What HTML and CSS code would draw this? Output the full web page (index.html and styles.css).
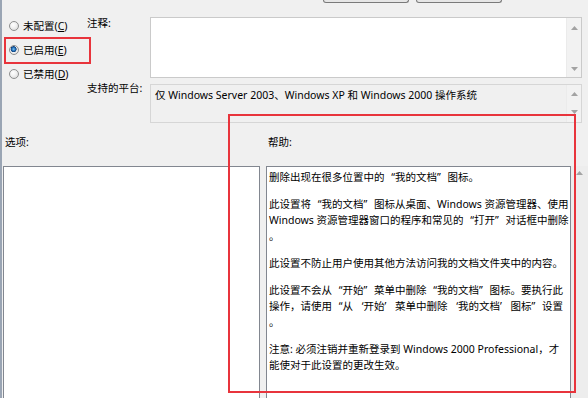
FILE: index.html
```html
<!doctype html>
<html lang="zh-CN">
<head>
	<meta charset="utf-8">
	<title>已启用 | 组策略设置</title>
	<link rel="stylesheet" href="styles.css">
</head>
<body>
	<div class="dialog">

		<div class="top-buttons">
			<span class="btn"></span>
			<span class="btn"></span>
		</div>

		<div class="settings">
			<div class="states">
				<label class="state"><input class="radio" type="radio" name="state"><span>未配置(<u>C</u>)</span></label>
				<label class="state"><input class="radio" type="radio" name="state" checked><span>已启用(<u>E</u>)</span></label>
				<label class="state"><input class="radio" type="radio" name="state"><span>已禁用(<u>D</u>)</span></label>
			</div>

			<div class="field-label">注释:</div>
			<div class="box memo">
				<div class="box-text"></div>
				<div class="scroll">
					<svg width="7" height="4" viewBox="0 0 7 4"><path d="M0 4L3.5 0L7 4Z" fill="#a3a3a3"/></svg>
					<svg width="7" height="4" viewBox="0 0 7 4"><path d="M0 0L3.5 4L7 0Z" fill="#a3a3a3"/></svg>
				</div>
			</div>

			<div class="field-label field-label--platform">支持的平台:</div>
			<div class="box platform">
				<div class="box-text">仅 Windows Server 2003、Windows XP 和 Windows 2000 操作系统</div>
				<div class="scroll">
					<svg width="7" height="4" viewBox="0 0 7 4"><path d="M0 4L3.5 0L7 4Z" fill="#a3a3a3"/></svg>
					<svg width="7" height="4" viewBox="0 0 7 4"><path d="M0 0L3.5 4L7 0Z" fill="#a3a3a3"/></svg>
				</div>
			</div>
		</div>

		<div class="panes">
			<div class="pane">
				<div class="pane-title">选项:</div>
				<div class="list"></div>
			</div>

			<div class="pane">
				<div class="pane-title">帮助:</div>
				<div class="help-wrap">
					<div class="help-text">
						<p>删除出现在很多位置中的<span class="ql">“</span>我的文档<span class="qr">”</span>图标。</p>
						<p>此设置将<span class="ql">“</span>我的文档<span class="qr">”</span>图标从桌面、Windows 资源管理器、使用<br>Windows 资源管理器窗口的程序和常见的<span class="ql">“</span>打开<span class="qr">”</span>对话框中删除<br>。</p>
						<p>此设置不防止用户使用其他方法访问我的文档文件夹中的内容。</p>
						<p>此设置不会从<span class="ql">“</span>开始<span class="qr">”</span>菜单中删除<span class="ql">“</span>我的文档<span class="qr">”</span>图标。要执行此<br>操作，请使用<span class="ql">“</span>从<span class="ql">‘</span>开始<span class="qr">’</span>菜单中删除<span class="ql">‘</span>我的文档<span class="qr">’</span>图标<span class="qr">”</span>设置<br>。</p>
						<p>注意: 必须注销并重新登录到 Windows 2000 Professional，才<br>能使对于此设置的更改生效。</p>
					</div>
					<div class="help-scroll">
						<svg width="7" height="4" viewBox="0 0 7 4"><path d="M0 4L3.5 0L7 4Z" fill="#a3a3a3"/></svg>
					</div>
				</div>
			</div>
		</div>

		<!-- красные рамки-пометки поверх скриншота -->
		<div class="mark mark-radio"></div>
		<div class="mark mark-help"></div>

	</div>
</body>
</html>
```

FILE: styles.css
```css
* {
	box-sizing: border-box;
	margin: 0;
	padding: 0;
}

body {
	width: 588px;
	height: 398px;
	overflow: hidden;
	color: #000;
	font: 400 10.5px/12px 'Noto Sans', 'Noto Sans CJK SC', sans-serif;
	background: #f0f0f0;
}

.dialog {
	position: relative;
	height: 398px;
	border-left: 2px solid #9aa5b4;
}

/* кнопки сверху, видны только нижние края */
.top-buttons {
	display: flex;
	gap: 7px;
	height: 17px;
	padding-left: 321px;
}

.btn {
	width: 86px;
	height: 3px;
	border: 1px solid #7a7a7a;
	border-top: 0;
	border-radius: 0 0 3px 3px;
	background: #e6e6e6;
}

.settings {
	display: grid;
	grid-template-columns: 85px 63px 432px;
	grid-template-rows: 61px 39px;
	row-gap: 6px;
}

.states {
	grid-row: 1 / 3;
	display: flex;
	flex-direction: column;
	gap: 12px;
	padding: 3px 0 0 7px;
}

.state {
	display: flex;
	align-items: center;
	gap: 4px;
	height: 12px;
	white-space: nowrap;
}

.state u {
	text-underline-offset: 1px;
}

.radio {
	width: 10px;
	height: 10px;
	border: 1px solid #8e8f8f;
	border-radius: 50%;
	background: radial-gradient(circle at 40% 35%, #fff 0, #f0f0f0 45%, #d4d4d4 100%);
	-webkit-appearance: none;
	appearance: none;
}

.radio:checked {
	background: radial-gradient(circle at 45% 40%, #7fc4f2 0, #1d6bb5 28%, #0f3f7a 42%, #f2f2f2 50%, #d4d4d4 100%);
}

.field-label {
	white-space: nowrap;
}

.field-label--platform {
	margin-top: -2px;
}

.box {
	display: flex;
	border: 1px solid #cacaca;
}

.box-text {
	flex: 1;
	padding: 3px 4px;
	line-height: 14px;
	white-space: nowrap;
}

.memo {
	background: #fff;
}

.platform {
	border-color: #d6d6d6;
	background: #f0f0f0;
}

.scroll {
	display: flex;
	flex-direction: column;
	justify-content: space-between;
	align-items: center;
	width: 15px;
	padding: 8px 0 6px;
	background: #f2f2f2;
	border-left: 1px solid #ebebeb;
}

.platform .scroll {
	padding: 7px 0 8px;
}

.panes {
	display: grid;
	grid-template-columns: 257px 322px;
	column-gap: 6px;
	margin-top: 13px;
	padding-left: 1px;
}

.pane-title {
	height: 12px;
	margin-bottom: 18px;
	padding-left: 2px;
}

.list {
	height: 240px;
	border: 1px solid #828790;
	background: #fff;
}

.help-wrap {
	display: flex;
	height: 240px;
}

.help-text {
	flex: 1;
	padding: 2px 1px 0 2px;
	border: 1px solid #828790;
	background: #fff;
	line-height: 16px;
	white-space: nowrap;
}

.help-text p {
	margin-bottom: 11px;
}

/* кавычки во всю ширину иероглифа, как в YaHei */
.ql,
.qr {
	display: inline-block;
	width: 1em;
}

.ql {
	text-align: right;
}

.qr {
	text-align: left;
}

.help-scroll {
	display: flex;
	justify-content: center;
	width: 17px;
	padding-top: 5px;
	background: #ededed;
}

/* красные рамки */
.mark {
	position: absolute;
	border: 2px solid #e8343c;
}

.mark-radio {
	top: 37px;
	left: 2px;
	width: 87px;
	height: 27px;
}

.mark-help {
	top: 114px;
	left: 226px;
	width: 348px;
	height: 279px;
}
```
